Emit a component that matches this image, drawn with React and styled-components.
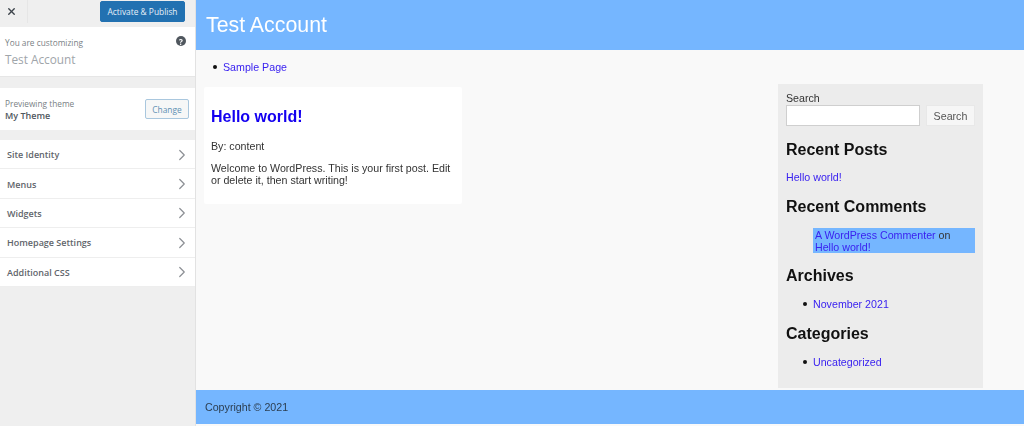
import React from 'react'
import styled, { createGlobalStyle } from 'styled-components'
import { X, ChevronRight } from 'lucide-react'

const MENU_ITEMS = ['Site Identity', 'Menus', 'Widgets', 'Homepage Settings', 'Additional CSS']

const GlobalStyle = createGlobalStyle`
    html, body {
        margin: 0;
        padding: 0;
        height: 426px;
        overflow: hidden;
        background: #f9f9f9;
    }
    * {
        box-sizing: border-box;
    }
`

const Page = styled.div`
    display: flex;
    width: 1024px;
    height: 426px;
    filter: blur(0.45px);
`

const Sidebar = styled.aside`
    width: 196px;
    flex-shrink: 0;
    background: #efefef;
    border-right: 1px solid #e2e2e2;
    font-family: 'Open Sans', 'Noto Sans', sans-serif;
    font-size: 8.3px;
    color: #50575e;
`

const TopBar = styled.div`
    display: flex;
    justify-content: space-between;
    align-items: flex-start;
    height: 27px;
    padding-right: 10px;
`

const CloseBox = styled.div`
    display: flex;
    align-items: center;
    justify-content: center;
    width: 28px;
    height: 23px;
    padding-right: 4px;
    border-right: 1px solid #e6e6e6;
    color: #3c434a;
`

const PublishButton = styled.button`
    width: 85px;
    height: 21px;
    margin-top: 1px;
    padding: 0;
    border: 1px solid #2271b1;
    border-radius: 2px;
    background: #2271b1;
    color: #e6f0f8;
    font: 8.4px 'Open Sans', 'Noto Sans', sans-serif;
`

const Intro = styled.div`
    position: relative;
    height: 50px;
    padding: 10px 5px 0;
    background: #ffffff;
    border-bottom: 1px solid #e6e6e6;
`

const Muted = styled.div`
    color: #7a7f85;
    line-height: 12px;
`

const SiteName = styled.div`
    margin-top: 2px;
    font-size: 11.8px;
    line-height: 17px;
    color: #a0a5aa;
`

const HelpIcon = styled.span`
    position: absolute;
    top: 9px;
    right: 9px;
    display: flex;
    align-items: center;
    justify-content: center;
    width: 10px;
    height: 10px;
    border-radius: 50%;
    background: #50575e;
    color: #ffffff;
    font-size: 8px;
    font-weight: 700;
`

const ThemeRow = styled.div`
    display: flex;
    align-items: center;
    justify-content: space-between;
    height: 42px;
    margin: 11px 0 10px;
    padding: 0 6px 0 5px;
    background: #ffffff;
`

const ThemeName = styled.div`
    color: #50575e;
    font-size: 9px;
    font-weight: 600;
    line-height: 11px;
`

const ChangeButton = styled.button`
    width: 44px;
    height: 20px;
    padding: 0;
    border: 1px solid #a9c7de;
    border-radius: 2px;
    background: #f6f7f7;
    color: #5d8fb3;
    font: 8.4px 'Open Sans', 'Noto Sans', sans-serif;
`

const MenuRow = styled.div`
    display: flex;
    align-items: center;
    justify-content: space-between;
    height: 29.4px;
    padding: 1px 4px 0 7px;
    background: #ffffff;
    border-bottom: 1px solid #eeeeee;
    font-size: 9px;
    font-weight: 600;
    color: #5f656b;
    svg {
        color: #8c8f94;
    }
`

const Preview = styled.main`
    display: flex;
    flex-direction: column;
    flex: 1;
    min-width: 0;
    font-family: 'Liberation Sans', Arial, sans-serif;
    font-size: 10.67px;
    color: #333333;
`

const SiteHeader = styled.header`
    display: flex;
    align-items: center;
    height: 50px;
    padding-left: 10px;
    background: #75b6ff;
    color: #ffffff;
    font-size: 21.33px;
`

const BulletList = styled.ul`
    margin: 0;
    padding-left: 27px;
    list-style: none;
    line-height: 14px;

    li {
        position: relative;
    }

    li::before {
        content: '';
        position: absolute;
        top: 5px;
        left: -10px;
        width: 4px;
        height: 4px;
        border-radius: 50%;
        background: #111111;
    }
`

const NavList = styled(BulletList)`
    height: 34px;
    padding-top: 10px;
`

const Link = styled.a`
    color: #3a22f0;
    text-decoration: none;
`

const Content = styled.div`
    display: flex;
    justify-content: space-between;
    align-items: flex-start;
    height: 306px;
    padding: 0 41px 0 8px;
`

const Post = styled.article`
    width: 258px;
    height: 117px;
    margin-top: 3px;
    padding: 19px 7px 0;
    border-radius: 2px;
    background: #ffffff;
    line-height: 12px;
`

const PostTitle = styled.h2`
    margin: 0 0 13px;
    color: #1400f0;
    font-size: 16px;
    line-height: 21px;
`

const PostText = styled.p`
    margin: 0 0 10px;
`

const Widgets = styled.aside`
    width: 205px;
    height: 304px;
    padding: 8px 8px 0;
    background: #ececec;
`

const SearchLabel = styled.div`
    line-height: 13px;
`

const SearchRow = styled.div`
    display: flex;
    justify-content: space-between;
    margin-bottom: 13px;
`

const SearchInput = styled.input`
    width: 134px;
    height: 21px;
    border: 1px solid #cfcfcf;
    background: #ffffff;
`

const SearchButton = styled.button`
    width: 49px;
    height: 21px;
    padding: 0;
    border: 1px solid #e8e8e8;
    background: #f6f6f6;
    color: #555555;
    font: 10.67px 'Liberation Sans', Arial, sans-serif;
`

const WidgetTitle = styled.h3`
    margin: 0 0 11px;
    color: #111111;
    font-size: 16px;
    line-height: 21px;
`

const WidgetBlock = styled.div`
    margin-bottom: 13px;
    line-height: 12px;
`

const CommentList = styled.div`
    margin: 0 0 12px 27px;
    padding: 1px 2px 0;
    background: #75b6ff;
    line-height: 12px;
`

const WidgetList = styled(BulletList)`
    margin-bottom: 12px;
`

const SiteFooter = styled.footer`
    display: flex;
    align-items: center;
    height: 34px;
    padding-left: 9px;
    background: #75b6ff;
    color: #2c3e50;
`

const App = () => (
    <Page>
        <GlobalStyle />
        <Sidebar>
            <TopBar>
                <CloseBox>
                    <X size={11} strokeWidth={3} />
                </CloseBox>
                <PublishButton>Activate &amp; Publish</PublishButton>
            </TopBar>
            <Intro>
                <Muted>You are customizing</Muted>
                <SiteName>Test Account</SiteName>
                <HelpIcon>?</HelpIcon>
            </Intro>
            <ThemeRow>
                <div>
                    <Muted>Previewing theme</Muted>
                    <ThemeName>My Theme</ThemeName>
                </div>
                <ChangeButton>Change</ChangeButton>
            </ThemeRow>
            {MENU_ITEMS.map(item => (
                <MenuRow key={item}>
                    {item}
                    <ChevronRight size={18} strokeWidth={1.6} />
                </MenuRow>
            ))}
        </Sidebar>
        <Preview>
            <SiteHeader>Test Account</SiteHeader>
            <NavList>
                <li>
                    <Link href="#">Sample Page</Link>
                </li>
            </NavList>
            <Content>
                <Post>
                    <PostTitle>Hello world!</PostTitle>
                    <PostText>By: content</PostText>
                    <PostText>Welcome to WordPress. This is your first post. Edit or delete it, then start writing!</PostText>
                </Post>
                <Widgets>
                    <SearchLabel>Search</SearchLabel>
                    <SearchRow>
                        <SearchInput />
                        <SearchButton>Search</SearchButton>
                    </SearchRow>
                    <WidgetTitle>Recent Posts</WidgetTitle>
                    <WidgetBlock>
                        <Link href="#">Hello world!</Link>
                    </WidgetBlock>
                    <WidgetTitle>Recent Comments</WidgetTitle>
                    <CommentList>
                        <Link href="#">A WordPress Commenter</Link> on <Link href="#">Hello world!</Link>
                    </CommentList>
                    <WidgetTitle>Archives</WidgetTitle>
                    <WidgetList>
                        <li>
                            <Link href="#">November 2021</Link>
                        </li>
                    </WidgetList>
                    <WidgetTitle>Categories</WidgetTitle>
                    <WidgetList>
                        <li>
                            <Link href="#">Uncategorized</Link>
                        </li>
                    </WidgetList>
                </Widgets>
            </Content>
            <SiteFooter>Copyright © 2021</SiteFooter>
        </Preview>
    </Page>
)

export default App
